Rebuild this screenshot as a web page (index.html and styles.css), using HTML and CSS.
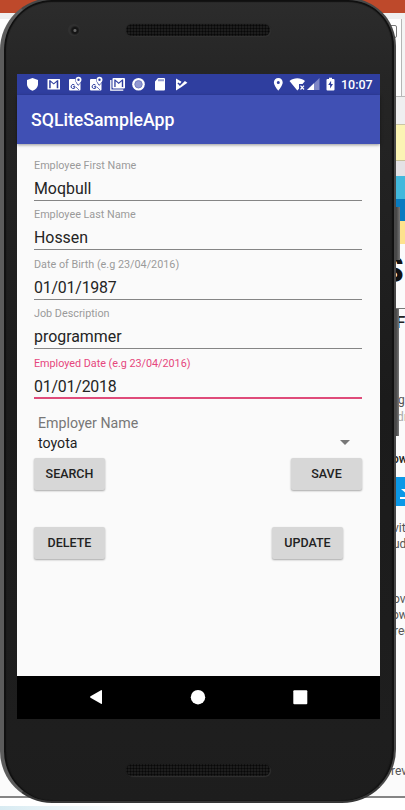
FILE: index.html
```html
<!DOCTYPE html>
<html lang="en">
<head>
<meta charset="utf-8">
<title>SQLiteSampleApp</title>
<link rel="stylesheet" href="styles.css">
</head>
<body>
<div class="desktop">
  <div class="strip red"></div>
  <div class="strip toolbar"><span class="tab"></span></div>
  <div class="strip grey"></div>
  <div class="strip notice"></div>
  <div class="strip mauve"></div>
  <div class="strip cyan"></div>
  <div class="strip blue"></div>
  <div class="strip yellow"></div>
  <div class="page">
    <div class="big">S</div>
    <div class="heading">F</div>
    <div class="row r-g">g</div>
    <div class="row r-dr">dr</div>
    <div class="row r-ow">ow</div>
    <div class="download"><svg width="12" height="16" viewBox="0 0 12 16"><path d="M5 1h6v5h3l-6 6-7-6h4zM0 14h12v2H0z" fill="#fff"/></svg></div>
    <div class="row r-vit">vit</div>
    <div class="row r-ud">ud</div>
    <div class="row r-ov">ov</div>
    <div class="row r-ow2">ow</div>
    <div class="row r-rec">rec</div>
    <div class="row r-rev">rev</div>
  </div>
  <div class="foot"></div>
</div>

<div class="side-key power"></div>
<div class="side-key volume"></div>
<div class="phone">
  <div class="top-bezel"><span class="camera"></span><span class="speaker"></span></div>
  <div class="screen">
    <div class="status">
      <svg class="notif" width="175" height="21" viewBox="17 74 175 21" fill="#fff">
        <path d="M32.5 78l5.5 2v4c0 3.3-2.4 5.700-5.500 6.700-3.100-1-5.500-3.400-5.500-6.700v-4z"/>
        <path fill-rule="evenodd" d="M48 79h11.500q.5 0 .5.5v9.500q0 .5-.5.500H48q-.5 0-.5-.5v-9.500q0-.5.5-.5zM49.200 80.300v7.900h1.500V82l3 2.600 3-2.600v6.200h1.600v-7.900h-1.200l-3.400 2.900-3.400-2.900z"/>
        <g id="maps">
          <path d="M69.500 79H75c0 3 1.800 5 3.300 6.800 1-1 1.700-2 2.200-3V89.500q0 1-1 1h-9.500q-1 0-1-1V80z"/>
          <path fill-rule="evenodd" d="M78.500 76.700c1.800 0 3 1.300 3 3 0 2-3 5-3 5s-3-3-3-5c0-1.700 1.300-3 3-3zm0 1.900a1.200 1.200 0 1 0 0 2.400 1.200 1.200 0 0 0 0-2.400z"/>
          <path d="M74.600 85.200a2 2 0 1 0 .5 1.500h-2" fill="none" stroke="#2e3e9f" stroke-width="1"/>
          <path d="M76 87l3 3" stroke="#2e3e9f" stroke-width=".7"/>
        </g>
        <use href="#maps" x="21"/>
        <path d="M110.800 80v10.200h12.500" fill="none" stroke="#fff" stroke-width="1.300"/>
        <path fill-rule="evenodd" d="M113.500 78H124q1 0 1 1v8.500q0 1-1 1h-10.500q-1 0-1-1V79q0-1 1-1zM114.300 79.400v7.500h1.300v-5.600l3.100 2.700 3.100-2.700v5.600h1.400v-7.500h-1l-3.500 3-3.500-3z"/>
        <circle cx="138.500" cy="84.300" r="6.300"/><circle cx="138.500" cy="84.300" r="3.700" fill="#9299d1" stroke="#747dc2"/>
        <path fill-rule="evenodd" d="M158 78h6q1 0 1 1v10.500q0 1-1 1h-8q-1 0-1-1V81.500zM158.500 79.300v2h1v-2zm2 0v2h1v-2zm2 0v2h1v-2z"/>
        <path d="M176 78.500l5.500 3.200-1.500 2.100-1.600-1.300-1 .8 2.500 2.600 5-4.800 2.500 1.600-5.900 4.300-5.500 3.500z"/>
      </svg>
      <svg class="system" width="66" height="21" viewBox="273 74 66 21" fill="#fff">
        <path fill-rule="evenodd" d="M278.300 78c2.600 0 4.400 1.900 4.400 4.400 0 3.200-4.400 8.100-4.400 8.100s-4.400-4.900-4.400-8.100c0-2.500 1.900-4.400 4.400-4.400zm0 2.900a1.500 1.500 0 1 0 0 3 1.500 1.500 0 0 0 0-3z"/>
        <path d="M289.500 81c4.300-3.800 11.200-3.800 15.500 0l-2.500 3H299v4.700L297.300 90.500z"/>
        <path d="M300.500 85.700l3.500 3.800m0-3.800l-3.500 3.800" stroke="#fff" stroke-width="1.200"/>
        <path d="M319.500 78v12H307z" fill="#7f87c6"/><path d="M314 83.300V90h-7z"/>
        <path fill-rule="evenodd" d="M327.500 79h1.500v-1.300h3V79h1.500q1 0 1 1v9.500q0 1-1 1h-6q-1 0-1-1V80q0-1 1-1zm3.600 1.700l-2.900 4.300h1.900v3.600l2.900-4.500h-1.900z"/>
      </svg>
      <span class="clock">10:07</span>
    </div>
    <div class="appbar">SQLiteSampleApp</div>
    <div class="content">
      <div class="field"><label>Employee First Name</label><div class="value">Moqbull</div></div>
      <div class="field"><label>Employee Last Name</label><div class="value">Hossen</div></div>
      <div class="field"><label>Date of Birth (e.g 23/04/2016)</label><div class="value date">01/01/1987</div></div>
      <div class="field"><label>Job Description</label><div class="value">programmer</div></div>
      <div class="field active"><label>Employed Date (e.g 23/04/2016)</label><div class="value date">01/01/2018</div></div>
      <div class="employer">Employer Name</div>
      <div class="spinner"><span>toyota</span><i class="caret"></i></div>
      <div class="buttons"><button>SEARCH</button><button>SAVE</button></div>
      <div class="buttons second"><button>DELETE</button><button>UPDATE</button></div>
    </div>
    <div class="nav">
      <svg width="363" height="43" viewBox="17 676 363 43" fill="#fff">
        <path d="M90.500 696.300L101 690.200q1-.5 1 .5v12.600q0 1-1 .5L90.500 697.700q-1-.7 0-1.400z"/>
        <circle cx="198" cy="697.200" r="7.200"/><rect x="293.300" y="690.300" width="14" height="14" rx="1"/>
      </svg>
    </div>
  </div>
  <div class="bottom-bezel"><span class="speaker"></span></div>
</div>
</body>
</html>
```
FILE: styles.css
```css
* { box-sizing: border-box; }
body { margin: 0; width: 405px; height: 810px; overflow: hidden; position: relative; font-family: Roboto, "Liberation Sans", sans-serif; }
.desktop { width: 405px; height: 810px; display: flex; flex-direction: column; background: #fbfbfb; }
.strip { flex: none; }
.red { height: 13px; background: #be492b; }
.toolbar { height: 84px; background: #fdfdfd; border-top: 6px solid #efefef; border-bottom: 1px solid #b9b9b9; display: flex; justify-content: flex-end; align-items: flex-start; background-image: linear-gradient(to right, transparent 401px, #b5b5b5 401px, #b5b5b5 402px, #f4f4f4 402px); }
.tab { width: 12px; height: 13px; margin: 6px 8px 0 0; border: 1px solid #777; border-radius: 2px; }
.grey { height: 28px; background: #efeff0; border-bottom: 1px solid #c9c5a6; }
.notice { height: 36px; background: #fbf4b4; border-bottom: 1px solid #c8c29a; }
.mauve { height: 15px; background: #e4e2e5; }
.cyan { height: 23px; background: #42b8dc; }
.blue { height: 22px; background: #087bc0; }
.yellow { height: 23px; background: #fde28e; }
.page { flex: 1; padding-left: 396px; overflow: hidden; }
.big { height: 65px; margin-left: -15px; border-bottom: 1px solid #777; font-size: 37px; font-weight: 700; line-height: 52px; color: #111; }
.heading { height: 26px; font-size: 17px; font-weight: 500; line-height: 26px; color: #222; }
.row { width: 30px; height: 16px; font-size: 12px; line-height: 16px; color: #555; white-space: nowrap; }
.r-g { margin: 57px 0 0 2px; }
.r-dr { margin: 1px 0 0 1px; color: #aaa; }
.r-ow { margin: 26px 0 0 -4px; color: #222; font-weight: 500; }
.download { height: 29px; margin-top: 10px; padding: 6px 0 0 4px; background: #0b98e7; }
.r-vit { margin: 14px 0 0 -3px; }
.r-ud { margin-left: -3px; }
.r-ov { margin: 39px 0 0 -3px; }
.r-ow2 { margin-left: -4px; }
.r-rec { margin-left: -2px; }
.r-rev { margin: 124px 0 0 -5px; }
.foot { height: 14px; border-top: 2px solid #858585; background: linear-gradient(to right, #d8ebf2, #fff 130px) 0 8px no-repeat, #fff; }
.side-key { position: absolute; left: 395px; background: linear-gradient(to right, #333, #777); }
.power { top: 207px; width: 5px; height: 53px; }
.volume { top: 309px; width: 4px; height: 127px; }
.phone { position: absolute; left: 0; top: -2px; width: 396px; height: 805px; border-radius: 52px 48px 54px 52px; border: 2px solid #484848; border-left: 4px solid #5c5c5c; border-bottom-color: #363636; background: linear-gradient(#2c2c2c, #252525 10%, #1b1b1b 50%, #1e1e1e 92%, #1d1d1d); box-shadow: inset 2px 0 1px #101010, inset -2px 0 1px #111, inset 0 2px 1px #111; }
.top-bezel { height: 74px; display: flex; align-items: flex-start; }
.camera { flex: none; width: 12px; height: 12px; margin: 24px 46px 0 64px; border-radius: 50%; background: radial-gradient(circle at 58% 54%, #666 0 1px, #151515 2px 3px, #303030 5px); }
.speaker { flex: none; width: 144px; height: 12px; border-radius: 6px; background: radial-gradient(circle, #080808 .8px, #1d1d1d 1.300px) 0 0 / 3px 3px; box-shadow: 0 0 1px #181818, 1px 1px 1px #333; }
.top-bezel .speaker { margin-top: 24px; }
.screen { width: 363px; height: 645px; margin-left: 13px; background: #fafafa; }
.status { height: 21px; display: flex; background: #2f3e9f; color: #fff; }
.system { margin-left: 81px; }
.clock { margin-left: 2px; font-size: 12.500px; font-weight: 500; line-height: 22px; }
.appbar { height: 49px; padding-left: 14px; background: #4050b4; color: #fff; font-size: 17.700px; font-weight: 500; line-height: 51px; position: relative; box-shadow: 0 1px 3px #0006; }
.content { height: 532px; padding: 13px 18px 0 17px; }
.field { height: 49.400px; }
label { display: block; height: 16px; color: #9a9a9a; font-size: 10.800px; line-height: 17px; white-space: nowrap; }
.value { height: 28px; border-bottom: 1px solid #858585; color: #242424; font-size: 15.900px; line-height: 31px; }
.value.date { letter-spacing: -.2px; }
.active label { color: #e6477d; letter-spacing: -.02px; }
.active .value { border-bottom: 2px solid #df4b7a; }
.employer { height: 21px; margin-top: 8px; padding-left: 4px; color: #777; font-size: 14.200px; line-height: 23px; }
.spinner { height: 20px; padding: 0 12px 0 4px; display: flex; align-items: center; justify-content: space-between; color: #1f1f1f; font-size: 14.200px; line-height: 20px; }
.caret { border: solid transparent; border-width: 5px 5px 0; border-top-color: #777; }
.buttons { height: 69px; padding-top: 5px; display: flex; justify-content: space-between; }
.second { margin-right: 19px; }
button { width: 71px; height: 32px; margin: 0; padding: 0; border: 0; border-radius: 2px; background: #d7d7d7; box-shadow: 0 1px 2px #0005; color: #222; font: 500 12.500px/32px Roboto, sans-serif; }
.nav { height: 43px; background: #000; }
.nav svg { display: block; }
.bottom-bezel { padding: 45px 0 0 122px; }
.bottom-bezel .speaker { display: block; }
```
